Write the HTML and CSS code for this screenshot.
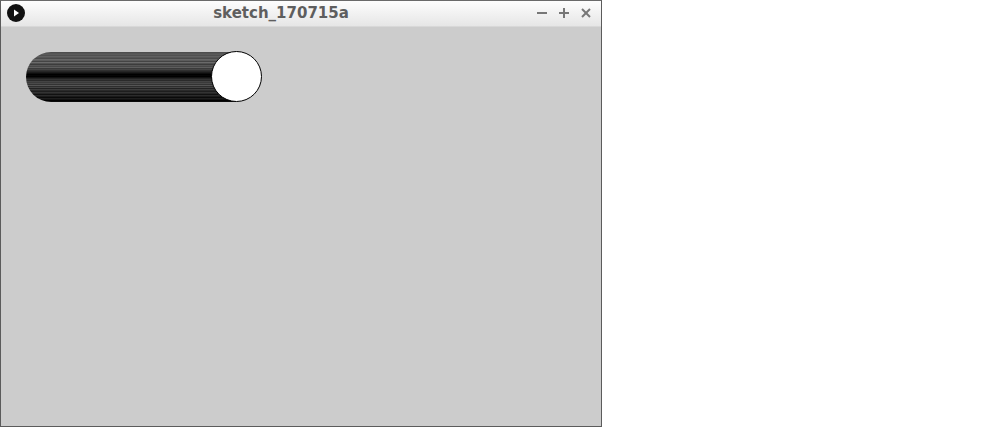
FILE: index.html
```html
<!DOCTYPE html>
<html lang="en">
<head>
    <meta charset="UTF-8">
    <title>sketch_170715a</title>
    <link rel="stylesheet" href="styles.css">
</head>
<body>
    <div class="window">
        <header class="titlebar">
            <div class="app-icon">
                <svg viewBox="0 0 20 20" width="20" height="20">
                    <circle cx="10" cy="10" r="9" fill="#111"></circle>
                    <polygon points="8,6.5 13,10 8,13.5" fill="#fff"></polygon>
                </svg>
            </div>
            <div class="title">sketch_170715a</div>
            <div class="controls">
                <svg viewBox="0 0 12 12" width="12" height="12">
                    <line x1="1" y1="6" x2="11" y2="6" stroke="#777" stroke-width="2"></line>
                </svg>
                <svg viewBox="0 0 12 12" width="12" height="12">
                    <line x1="1" y1="6" x2="11" y2="6" stroke="#777" stroke-width="2"></line>
                    <line x1="6" y1="1" x2="6" y2="11" stroke="#777" stroke-width="2"></line>
                </svg>
                <svg viewBox="0 0 12 12" width="12" height="12">
                    <line x1="2" y1="2" x2="10" y2="10" stroke="#777" stroke-width="2"></line>
                    <line x1="10" y1="2" x2="2" y2="10" stroke="#777" stroke-width="2"></line>
                </svg>
            </div>
        </header>

        <main class="canvas">
            <div class="toggle">
                <div class="track"></div>
                <div class="knob"></div>
            </div>
        </main>
    </div>
</body>
</html>
```

FILE: styles.css
```css
/* Page */
body {
    margin: 0;
    background-color: #ffffff;
    font-family: 'DejaVu Sans', sans-serif;
}

/* Window frame */
.window {
    width: 602px;
    height: 427px;
    box-sizing: border-box;
    border: 1px solid #5b5b5b;
    border-top-color: #6a6a6a;
    display: flex;
    flex-direction: column;
}

/* Title bar */
.titlebar {
    height: 23px;
    padding-bottom: 2px;
    display: flex;
    align-items: center;
    background: linear-gradient(#fdfdfd, #e6e6e6);
    border-bottom: 1px solid #d8d8d8;
}

.app-icon {
    width: 20px;
    height: 20px;
    margin-left: 5px;
}

.app-icon svg {
    display: block;
}

.title {
    flex: 1;
    text-align: center;
    font-size: 15px;
    font-weight: bold;
    color: #5e5e5e;
}

.controls {
    display: flex;
    gap: 10px;
    margin-right: 9px;
}

.controls svg {
    display: block;
}

/* Sketch canvas */
.canvas {
    flex: 1;
    background-color: #cccccc;
    padding: 24px 0 0 25px;
}

.toggle {
    display: flex;
    align-items: center;
}

.track {
    width: 210px;
    height: 50px;
    border-radius: 25px 0 0 25px;
    background: linear-gradient(
        #4d4d4d 0px 1px, #555 1px 2px, #5a5a5a 2px 3px, #505050 3px 4px,
        #606060 4px 5px, #555 5px 6px, #4a4a4a 6px 7px, #666 7px 8px,
        #5c5c5c 8px 9px, #444 9px 10px, #6a6a6a 10px 11px, #505050 11px 12px,
        #3c3c3c 12px 13px, #555 13px 14px, #484848 14px 15px, #5e5e5e 15px 16px,
        #3a3a3a 16px 17px, #444 17px 18px, #303030 18px 19px, #262626 19px 20px,
        #1a1a1a 20px 21px, #0d0d0d 21px 22px, #000 22px 23px, #050505 23px 24px,
        #000 24px 25px, #111 25px 26px, #222 26px 27px, #333 27px 28px,
        #2a2a2a 28px 29px, #444 29px 30px, #3a3a3a 30px 31px, #4a4a4a 31px 32px,
        #333 32px 33px, #555 33px 34px, #2e2e2e 34px 35px, #444 35px 36px,
        #222 36px 37px, #3d3d3d 37px 38px, #2a2a2a 38px 39px, #1e1e1e 39px 40px,
        #333 40px 41px, #262626 41px 42px, #111 42px 43px, #2b2b2b 43px 44px,
        #1a1a1a 44px 45px, #0a0a0a 45px 46px, #1e1e1e 46px 47px, #111 47px 48px,
        #000 48px 49px, #0a0a0a 49px 50px
    );
}

.knob {
    width: 49px;
    height: 49px;
    margin-left: -25px;
    border: 1px solid #000;
    border-radius: 50%;
    background-color: #ffffff;
}
```
